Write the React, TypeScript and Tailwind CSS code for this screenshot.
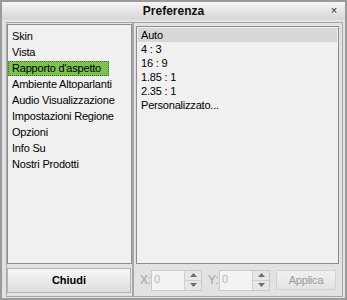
const sections = [
  "Skin",
  "Vista",
  "Rapporto d'aspetto",
  "Ambiente Altoparlanti",
  "Audio Visualizzazione",
  "Impostazioni Regione",
  "Opzioni",
  "Info Su",
  "Nostri Prodotti",
];

const ratios = ["Auto", "4 : 3", "16 : 9", "1.85 : 1", "2.35 : 1", "Personalizzato..."];

function Spin({ label }: { label: string }) {
  return (
    <div className="flex items-center">
      <span className="w-[11px] text-[12px] leading-none text-[#9aa3b0]">{label}</span>
      <div className="flex h-[21px] w-[51px] border border-[#c9c9c9] bg-[#f3f3f3]">
        <span className="flex-1 pl-[2px] pt-[1px] text-[11px] leading-[14px] text-[#b8b8b8]">0</span>
        <div className="flex w-[17px] flex-col border-l border-[#d0d0d0] bg-[#e6e6e6]">
          <div className="flex flex-1 items-center justify-center border-b border-[#d0d0d0]">
            <svg width="7" height="4" viewBox="0 0 7 4">
              <path d="M0 4 L3.5 0 L7 4 Z" fill="#6d6d6d" />
            </svg>
          </div>
          <div className="flex flex-1 items-center justify-center">
            <svg width="7" height="4" viewBox="0 0 7 4">
              <path d="M0 0 L7 0 L3.5 4 Z" fill="#6d6d6d" />
            </svg>
          </div>
        </div>
      </div>
    </div>
  );
}

export default function App() {
  return (
    <div
      className="flex h-[300px] w-[347px] flex-col border-2 border-[#9b9b9b] bg-[#e2e2e2] text-[11px] tracking-[-0.2px] text-black"
      style={{ fontFamily: '"Liberation Sans", Arial, sans-serif' }}
    >
      {/* title bar */}
      <div className="relative flex h-[18px] items-center justify-center bg-gradient-to-b from-[#f6f6f6] to-[#d5d5d5]">
        <span className="text-[12px] font-bold leading-none tracking-normal text-[#111]">Preferenza</span>
        <span className="absolute right-[8px] top-[3px] text-[11px] leading-none text-[#222]">×</span>
      </div>

      <div className="flex flex-1 pb-[1px] pl-[4px] pr-[2px] pt-[2px]">
        {/* left column */}
        <div className="flex w-[127px] flex-col border border-[#a8a8a8]">
          <div className="mt-[1px] flex-1 border border-[#8e8e8e] bg-[#f0f0f0] pt-[3px]">
            {sections.map((s, i) => (
              <div key={s} className="flex h-[16px] items-center">
                {i === 2 ? (
                  <span className="flex h-[15px] w-[101px] items-center border border-dotted border-[#3f6a22] bg-[#7cc250] pl-[3px] leading-none">
                    {s}
                  </span>
                ) : (
                  <span className="pl-[4px] leading-none">{s}</span>
                )}
              </div>
            ))}
          </div>
          <button className="mb-[3px] mt-[4px] h-[25px] w-[124px] border border-[#b4b4b4] bg-gradient-to-b from-[#f6f6f6] via-[#ebebeb] to-[#dcdcdc] text-[11px] font-bold tracking-normal text-black">
            Chiudi
          </button>
        </div>

        {/* right column */}
        <div className="flex flex-1 flex-col border border-[#a8a8a8] pl-[2px] pr-[3px] pt-[3px]">
          <div className="flex-1 border border-[#8e8e8e] bg-[#f0f0f0] p-[1px]">
            {ratios.map((r, i) => (
              <div
                key={r}
                className={`flex h-[14px] items-center pl-[3px] leading-none ${i === 0 ? "bg-[#d7d7d7]" : ""}`}
              >
                {r}
              </div>
            ))}
          </div>
          <div className="flex h-[32px] items-center gap-[6px] pl-[4px]">
            <Spin label="X:" />
            <Spin label="Y:" />
            <button className="h-[20px] w-[60px] border border-[#d2d2d2] bg-gradient-to-b from-[#f0f0f0] to-[#e4e4e4] text-[11px] text-[#9a9a9a]">
              Applica
            </button>
          </div>
        </div>
      </div>
    </div>
  );
}
